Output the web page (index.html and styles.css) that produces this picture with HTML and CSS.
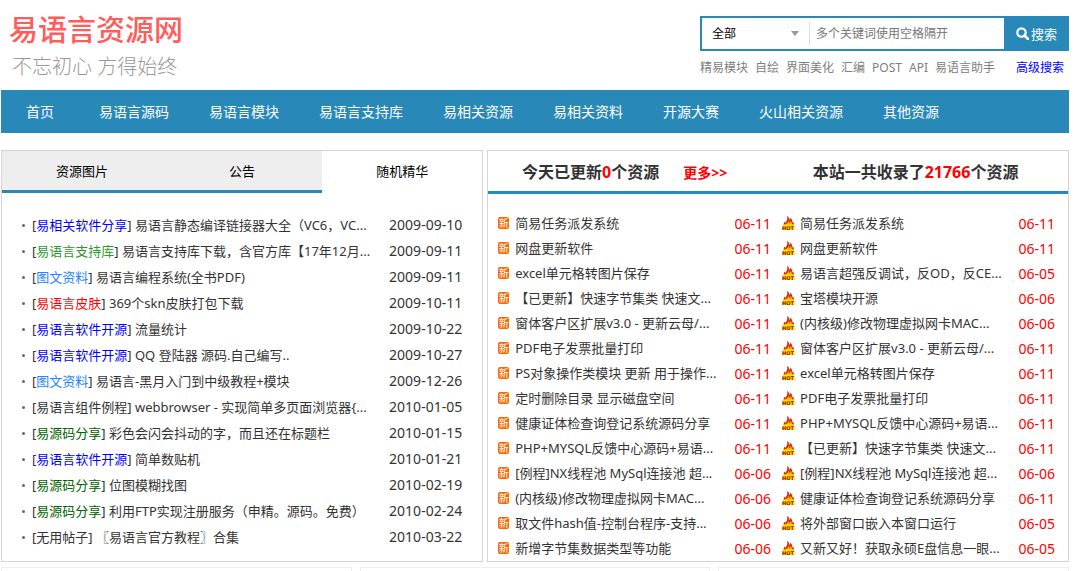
FILE: index.html
```html
<!DOCTYPE html>
<html lang="zh-CN">
  <head>
    <meta charset="utf-8" />
    <title>易语言资源网</title>
    <link rel="stylesheet" href="styles.css">
  </head>
  <body>
    <svg class="defs" aria-hidden="true">
      <symbol id="hot" viewBox="0 0 13 14">
        <path d="M5 0c2 1 2.500 2.500 1.800 4C8 3.600 8.500 2.500 8.200 1.500C10 3 10.600 5 10.300 6.500L11.500 6C12 8 12 9 11.500 10H2C1.200 8 1.800 6.500 3 5.500L3.200 7C4.500 5.500 6 3.500 5 0z" fill="#d62a12" />
        <path d="M6.500 4.500C7.500 5.500 7 6.500 7.500 7.200C8.500 6.500 8.700 5.500 8.600 4.500C10 6 9.500 8 10.500 8L11 10H2.500C2.500 9 3 8.200 4 8C5.500 7.200 6.700 6.200 6.500 4.500z" fill="#ffb400" />
        <path d="M1 8.500h11l1 5.500H0z" fill="#ffe600" />
      </symbol>
    </svg>

    <header class="header">
      <div class="brand">
        <h1 class="logo">易语言资源网</h1>
        <p class="slogan">不忘初心 方得始终</p>
      </div>
      <div class="search">
        <form class="search-form">
          <div class="search-type">
            <select aria-label="分类">
              <option>全部</option>
            </select>
          </div>
          <input class="search-input" type="text" aria-label="关键词" placeholder="多个关键词使用空格隔开" />
          <button class="search-btn" type="submit">
            <svg width="13" height="13" viewBox="0 0 13 13" aria-hidden="true">
              <circle cx="5.500" cy="5.500" r="4.200" fill="none" stroke="#fff" stroke-width="2.200" />
              <path d="M8.500 8.500L12 12" stroke="#fff" stroke-width="2.600" stroke-linecap="round" />
            </svg>
            搜索
          </button>
        </form>
        <div class="hot-words">
          <a href="#">精易模块</a>
          <a href="#">自绘</a>
          <a href="#">界面美化</a>
          <a href="#">汇编</a>
          <a href="#">POST</a>
          <a href="#">API</a>
          <a href="#">易语言助手</a>
          <a class="advanced" href="#">高级搜索</a>
        </div>
      </div>
    </header>

    <nav class="nav">
      <a class="home" href="#">首页</a>
      <a href="#">易语言源码</a>
      <a href="#">易语言模块</a>
      <a href="#">易语言支持库</a>
      <a href="#">易相关资源</a>
      <a href="#">易相关资料</a>
      <a href="#">开源大赛</a>
      <a href="#">火山相关资源</a>
      <a href="#">其他资源</a>
    </nav>

    <main class="main">
      <section class="panel panel-left">
        <div class="tabs">
          <button class="tab" type="button">资源图片</button>
          <button class="tab" type="button">公告</button>
          <button class="tab active" type="button">随机精华</button>
        </div>
        <ul class="essence">
          <li><span class="title">[<a class="blue" href="#">易相关软件分享</a>] <a href="#">易语言静态编译链接器大全（VC6，VC...</a></span><time>2009-09-10</time></li>
          <li><span class="title">[<a class="green" href="#">易语言支持库</a>] <a href="#">易语言支持库下载，含官方库【17年12月...</a></span><time>2009-09-11</time></li>
          <li><span class="title">[<a class="sky" href="#">图文资料</a>] <a href="#">易语言编程系统(全书PDF)</a></span><time>2009-09-11</time></li>
          <li><span class="title">[<a class="red" href="#">易语言皮肤</a>] <a href="#">369个skn皮肤打包下载</a></span><time>2009-10-11</time></li>
          <li><span class="title">[<a class="blue" href="#">易语言软件开源</a>] <a href="#">流量统计</a></span><time>2009-10-22</time></li>
          <li><span class="title">[<a class="blue" href="#">易语言软件开源</a>] <a href="#">QQ 登陆器 源码.自己编写..</a></span><time>2009-10-27</time></li>
          <li><span class="title">[<a class="sky" href="#">图文资料</a>] <a href="#">易语言-黑月入门到中级教程+模块</a></span><time>2009-12-26</time></li>
          <li><span class="title">[<a href="#">易语言组件例程</a>] <a href="#">webbrowser - 实现简单多页面浏览器{...</a></span><time>2010-01-05</time></li>
          <li><span class="title">[<a class="dark-green" href="#">易源码分享</a>] <a href="#">彩色会闪会抖动的字，而且还在标题栏</a></span><time>2010-01-15</time></li>
          <li><span class="title">[<a class="blue" href="#">易语言软件开源</a>] <a href="#">简单数贴机</a></span><time>2010-01-21</time></li>
          <li><span class="title">[<a class="dark-green" href="#">易源码分享</a>] <a href="#">位图模糊找图</a></span><time>2010-02-19</time></li>
          <li><span class="title">[<a class="dark-green" href="#">易源码分享</a>] <a href="#">利用FTP实现注册服务（申精。源码。免费）</a></span><time>2010-02-24</time></li>
          <li><span class="title">[<a href="#">无用帖子</a>] <a href="#">〖易语言官方教程〗合集</a></span><time>2010-03-22</time></li>
        </ul>
      </section>

      <section class="panel panel-right">
        <div class="stats">
          <h2>今天已更新<em>0</em>个资源 <a class="more" href="#">更多&gt;&gt;</a></h2>
          <h2>本站一共收录了<em>21766</em>个资源</h2>
        </div>
        <div class="columns">
          <ul class="updates">
            <li><i class="new">新</i><a href="#">简易任务派发系统</a><time>06-11</time></li>
            <li><i class="new">新</i><a href="#">网盘更新软件</a><time>06-11</time></li>
            <li><i class="new">新</i><a href="#">excel单元格转图片保存</a><time>06-11</time></li>
            <li><i class="new">新</i><a href="#">【已更新】快速字节集类 快速文...</a><time>06-11</time></li>
            <li><i class="new">新</i><a href="#">窗体客户区扩展v3.0 - 更新云母/...</a><time>06-11</time></li>
            <li><i class="new">新</i><a href="#">PDF电子发票批量打印</a><time>06-11</time></li>
            <li><i class="new">新</i><a href="#">PS对象操作类模块 更新 用于操作...</a><time>06-11</time></li>
            <li><i class="new">新</i><a href="#">定时删除目录 显示磁盘空间</a><time>06-11</time></li>
            <li><i class="new">新</i><a href="#">健康证体检查询登记系统源码分享</a><time>06-11</time></li>
            <li><i class="new">新</i><a href="#">PHP+MYSQL反馈中心源码+易语...</a><time>06-11</time></li>
            <li><i class="new">新</i><a href="#">[例程]NX线程池 MySql连接池 超...</a><time>06-06</time></li>
            <li><i class="new">新</i><a href="#">(内核级)修改物理虚拟网卡MAC...</a><time>06-06</time></li>
            <li><i class="new">新</i><a href="#">取文件hash值-控制台程序-支持...</a><time>06-06</time></li>
            <li><i class="new">新</i><a href="#">新增字节集数据类型等功能</a><time>06-06</time></li>
          </ul>
          <ul class="updates">
            <li><svg class="hot"><use href="#hot" /><text x="0" y="14">HOT</text></svg><a href="#">简易任务派发系统</a><time>06-11</time></li>
            <li><svg class="hot"><use href="#hot" /><text x="0" y="14">HOT</text></svg><a href="#">网盘更新软件</a><time>06-11</time></li>
            <li><svg class="hot"><use href="#hot" /><text x="0" y="14">HOT</text></svg><a href="#">易语言超强反调试，反OD，反CE...</a><time>06-05</time></li>
            <li><svg class="hot"><use href="#hot" /><text x="0" y="14">HOT</text></svg><a href="#">宝塔模块开源</a><time>06-06</time></li>
            <li><svg class="hot"><use href="#hot" /><text x="0" y="14">HOT</text></svg><a href="#">(内核级)修改物理虚拟网卡MAC...</a><time>06-06</time></li>
            <li><svg class="hot"><use href="#hot" /><text x="0" y="14">HOT</text></svg><a href="#">窗体客户区扩展v3.0 - 更新云母/...</a><time>06-11</time></li>
            <li><svg class="hot"><use href="#hot" /><text x="0" y="14">HOT</text></svg><a href="#">excel单元格转图片保存</a><time>06-11</time></li>
            <li><svg class="hot"><use href="#hot" /><text x="0" y="14">HOT</text></svg><a href="#">PDF电子发票批量打印</a><time>06-11</time></li>
            <li><svg class="hot"><use href="#hot" /><text x="0" y="14">HOT</text></svg><a href="#">PHP+MYSQL反馈中心源码+易语...</a><time>06-11</time></li>
            <li><svg class="hot"><use href="#hot" /><text x="0" y="14">HOT</text></svg><a href="#">【已更新】快速字节集类 快速文...</a><time>06-11</time></li>
            <li><svg class="hot"><use href="#hot" /><text x="0" y="14">HOT</text></svg><a href="#">[例程]NX线程池 MySql连接池 超...</a><time>06-06</time></li>
            <li><svg class="hot"><use href="#hot" /><text x="0" y="14">HOT</text></svg><a href="#">健康证体检查询登记系统源码分享</a><time>06-11</time></li>
            <li><svg class="hot"><use href="#hot" /><text x="0" y="14">HOT</text></svg><a href="#">将外部窗口嵌入本窗口运行</a><time>06-05</time></li>
            <li><svg class="hot"><use href="#hot" /><text x="0" y="14">HOT</text></svg><a href="#">又新又好！获取永硕E盘信息一眼...</a><time>06-05</time></li>
          </ul>
        </div>
      </section>
    </main>

    <div class="boxes">
      <div class="box"></div>
      <div class="box"></div>
      <div class="box"></div>
    </div>
  </body>
</html>
```

FILE: styles.css
```css
* {
  box-sizing: border-box;
}
body {
  display: flex;
  flex-direction: column;
  min-height: 100vh;
  margin: 0;
  padding: 0 11px 0 1px;
  font-family: "Noto Sans", "Noto Sans CJK SC", sans-serif;
  font-size: 13px;
  color: #333;
  background: #fff;
}
h1,
h2,
p,
ul {
  margin: 0;
  padding: 0;
}
ul {
  list-style: none;
}
a {
  color: inherit;
  text-decoration: none;
}
button,
input,
select {
  font-family: inherit;
  border: none;
  padding: 0;
}
.defs {
  position: absolute;
  width: 0;
  height: 0;
}

/* header */
.header {
  display: flex;
  justify-content: space-between;
  height: 90px;
}
.brand {
  padding: 12px 0 0 8px;
}
.logo {
  font-size: 29px;
  line-height: 36px;
  font-weight: 500;
  color: #ff5c5c;
}
.slogan {
  padding-left: 3px;
  font-size: 20px;
  line-height: 38px;
  font-weight: 300;
  color: #999;
}
.search {
  width: 369px;
  padding-top: 16px;
}
.search-form {
  display: flex;
  height: 35px;
  border: 2px solid #2888b8;
}
.search-type {
  position: relative;
  width: 108px;
  margin: 4px 0;
  border-right: 1px solid #ddd;
}
.search-type select {
  width: 100%;
  height: 100%;
  padding-left: 10px;
  font-size: 12px;
  color: #000;
  background: #fff;
  appearance: none;
}
.search-type::after {
  content: "";
  position: absolute;
  right: 10px;
  top: 9px;
  border: 4px solid transparent;
  border-top: 5px solid #999;
  border-bottom: none;
  pointer-events: none;
}
.search-input {
  flex: 1;
  min-width: 0;
  padding-left: 6px;
  font-size: 12px;
}
.search-input::placeholder {
  color: #757575;
}
.search-btn {
  display: flex;
  align-items: center;
  justify-content: center;
  gap: 2px;
  width: 63px;
  padding-left: 2px;
  font-size: 13px;
  color: #fff;
  background: #2888b8;
  cursor: pointer;
}
.hot-words {
  display: flex;
  gap: 7px;
  padding-right: 5px;
  font-size: 12px;
  line-height: 34px;
  color: #808080;
}
.hot-words .advanced {
  margin-left: auto;
  color: #00f;
}

/* nav */
.nav {
  display: flex;
  padding-left: 5px;
  font-size: 14px;
  line-height: 43px;
  color: #fff;
  background: #2888b8;
}
.nav a {
  padding: 0 20px;
}
.nav .home {
  margin-right: 5px;
}

/* panels */
.main {
  display: flex;
  gap: 4px;
  margin-top: 17px;
}
.panel {
  min-width: 0;
  border: 1px solid #d8d4d4;
}
.panel-left {
  flex: 482 1 0;
}
.panel-right {
  flex: 582 1 0;
}
.tabs {
  display: flex;
}
.tab {
  flex: 1;
  height: 42px;
  font-size: 13px;
  color: #000;
  background: #eee;
  border-bottom: 3px solid #2888b8;
  cursor: pointer;
}
.tab.active {
  background: #fff;
  border-color: #fff;
}
.essence {
  padding: 19px 20px 11px;
}
.essence li {
  display: flex;
  align-items: center;
  line-height: 26px;
}
.essence li::before {
  content: "";
  width: 3px;
  height: 3px;
  margin-right: 7px;
  border-radius: 50%;
  background: #666;
}
.title {
  flex: 1;
  white-space: nowrap;
}
time {
  font-size: 14px;
}
.blue {
  color: #00f;
}
.green {
  color: #2e9a2e;
}
.dark-green {
  color: #006400;
}
.sky {
  color: #1e84ff;
}
.red {
  color: #f00;
}
.stats {
  display: flex;
  height: 43px;
  padding-right: 10px;
  border-bottom: 3px solid #2888b8;
}
.stats h2 {
  flex: 1;
  text-align: center;
  font-size: 16px;
  line-height: 42px;
}
.stats em {
  font-style: normal;
  color: #f00;
}
.more {
  margin: 0 12px 0 20px;
  font-size: 14px;
  color: #f00;
}
.columns {
  display: flex;
  gap: 11px;
  padding: 17px 13px 0 10px;
}
.updates {
  flex: 1;
  min-width: 0;
}
.updates li {
  display: flex;
  align-items: center;
  line-height: 25px;
}
.updates a {
  flex: 1;
  white-space: nowrap;
}
.updates time {
  color: #f00;
}
.new,
.hot {
  margin-bottom: 2px;
}
.new {
  width: 11px;
  margin-right: 6px;
  border-radius: 2px;
  font-size: 10px;
  line-height: 12px;
  font-style: normal;
  text-align: center;
  color: #fff;
  background: #f60;
}
.hot {
  width: 13px;
  height: 14px;
  margin-right: 5px;
}
.hot text {
  font-family: "DejaVu Sans", sans-serif;
  font-size: 5px;
  font-weight: bold;
  fill: #a00000;
}

/* bottom */
.boxes {
  display: flex;
  flex: 1;
  gap: 8px;
  margin-top: 5px;
}
.box {
  flex: 1;
  border: 1px solid #eee;
  border-bottom: none;
}
```
